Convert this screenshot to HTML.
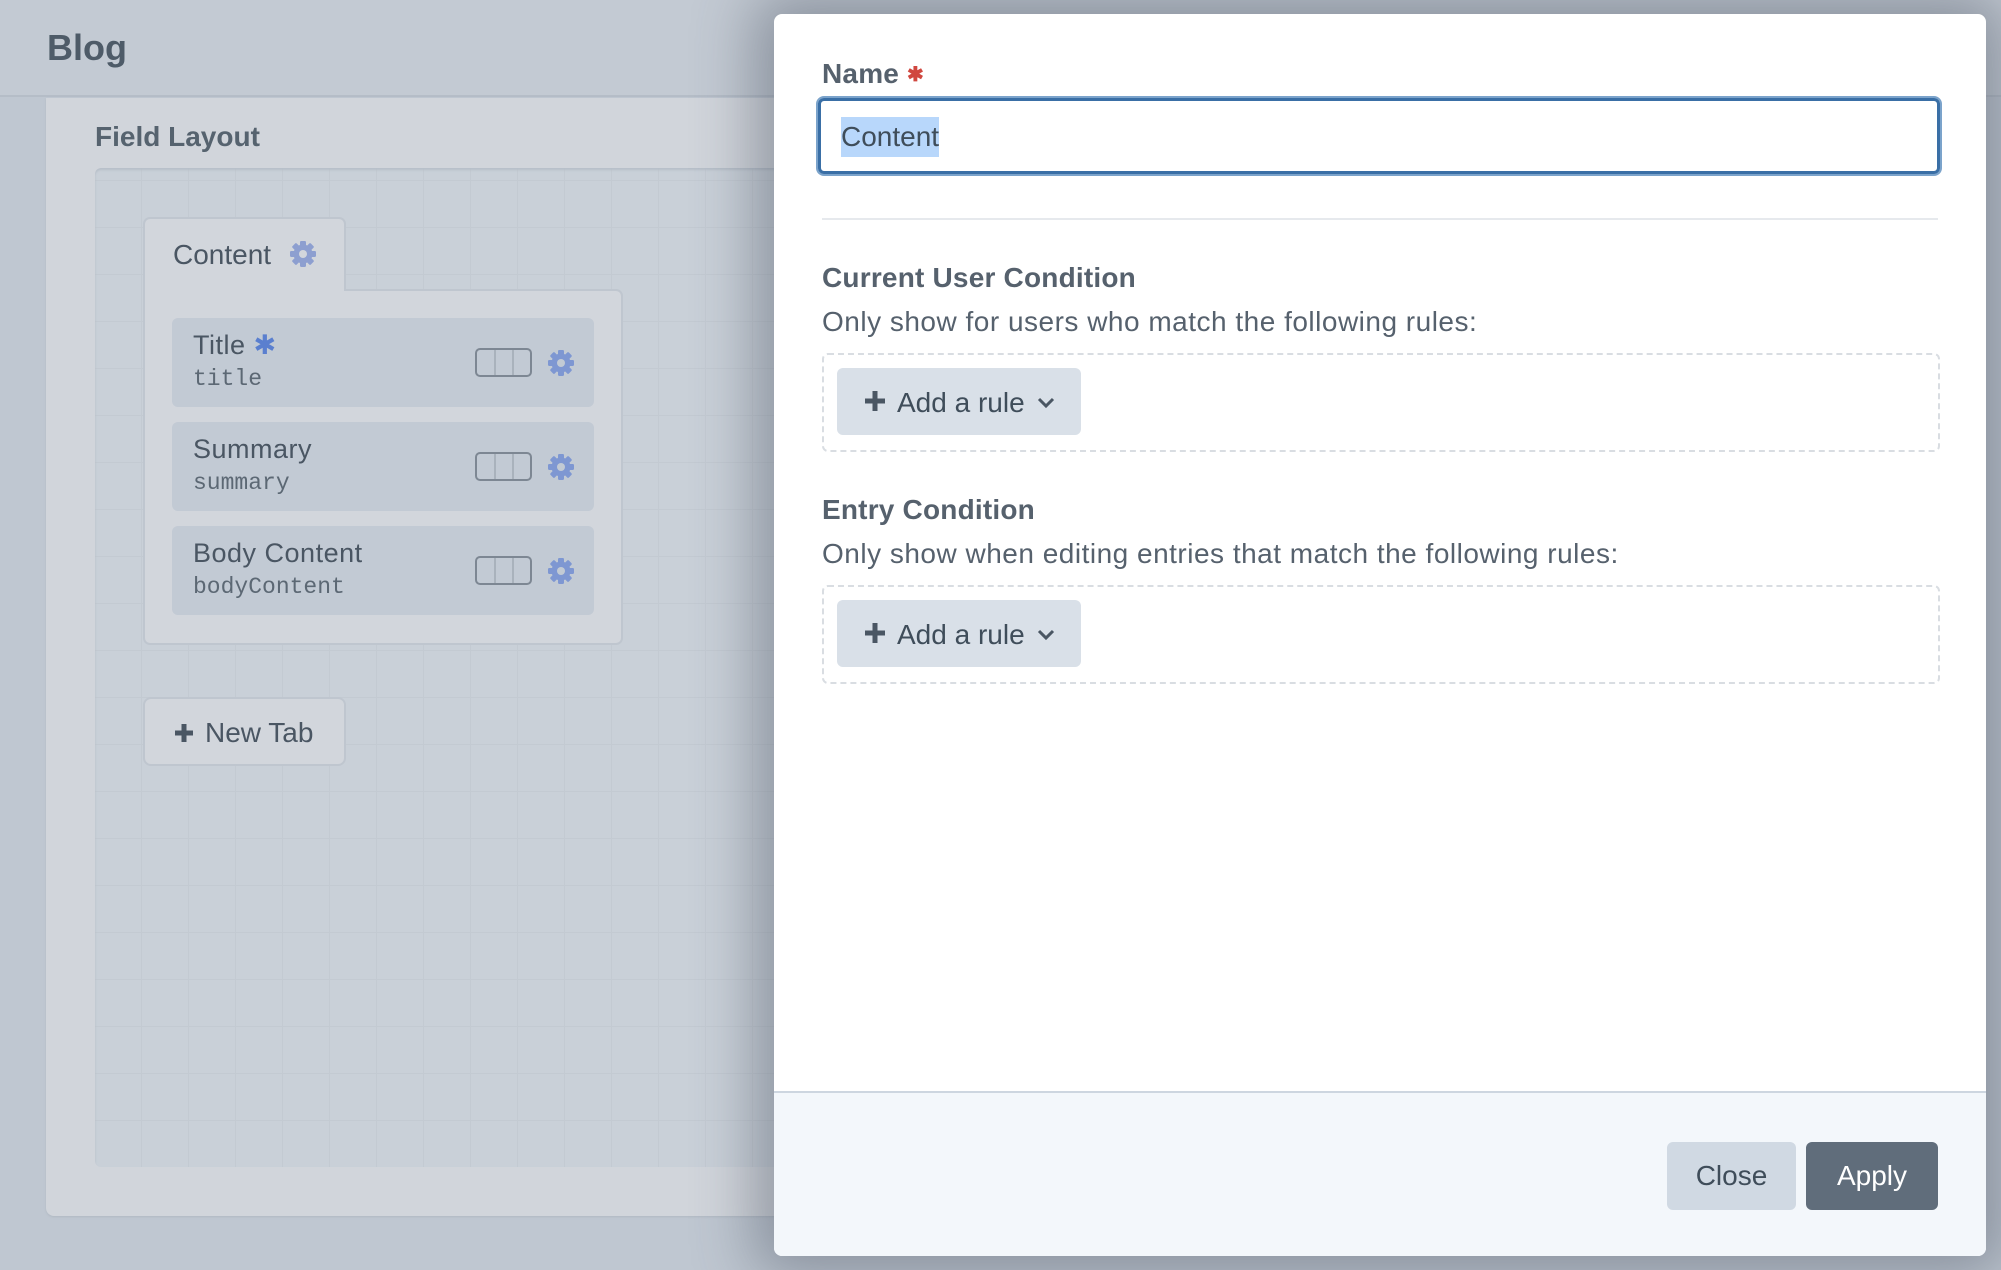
<!DOCTYPE html>
<html><head><meta charset="utf-8"><style>
*{box-sizing:border-box;margin:0;padding:0}
body{width:2001px;height:1270px;overflow:hidden;position:relative;background:#bfc7d1;font-family:"Liberation Sans",sans-serif;color:#3f4d5a}
.abs{position:absolute}
.hdr{left:0;top:0;width:2001px;height:97px;background:#c3cad3;border-bottom:2px solid #b5bdc7}
.blog{left:47px;top:27px;font-size:36px;font-weight:bold;color:#4e5b68}
.card{left:46px;top:98px;width:1100px;height:1118px;background:#d1d5db;border-radius:0 0 8px 8px;box-shadow:0 1px 2px #b0b8c2}
.fl{left:95px;top:121px;font-size:28px;font-weight:bold;color:#56636f}
.grid{left:95px;top:168px;width:1000px;height:999px;border-radius:6px;background-color:#c9d0d8;
background-image:repeating-linear-gradient(90deg,transparent 0 46px,#c3cad2 46px 47px),repeating-linear-gradient(0deg,transparent 0 46px,#c3cad2 46px 47px);box-shadow:inset 0 2px 2px #b6bec8}
.tab{left:143px;top:217px;width:203px;height:76px;background:#d2d6dc;border:2px solid #bfc6cf;border-bottom:none;border-radius:7px 7px 0 0}
.tabbody{left:143px;top:289px;width:480px;height:356px;background:#d2d6dc;border:2px solid #bfc6cf;border-radius:0 7px 7px 7px}
.tabfix{left:145px;top:287px;width:199px;height:6px;background:#d2d6dc}
.ct{left:173px;top:239px;font-size:28px;color:#4a5663}
.row{left:172px;width:422px;height:89px;background:#c2cad4;border-radius:6px}
.rt{position:absolute;left:21px;top:12px;font-size:27px;letter-spacing:.5px;color:#4a5663}
.rc{position:absolute;left:21px;top:48px;font-size:23px;font-family:"Liberation Mono",monospace;color:#5c6874}
.tog{position:absolute;left:303px;top:30px;width:57px;height:29px;border:2px solid #7d8793;border-radius:5px;
background:linear-gradient(90deg,transparent 17px,#a9b2bc 17px 19px,transparent 19px 35px,#a9b2bc 35px 37px,transparent 37px)}
.gear{position:absolute}
.nt{left:143px;top:697px;width:203px;height:69px;background:#d2d6dc;border:2px solid #bfc6cf;border-radius:8px;font-size:28px;color:#4a5663;padding:18px 0 0 28px}
.modal{left:774px;top:14px;width:1212px;height:1242px;background:#fff;border-radius:8px;box-shadow:0 0 60px 20px rgba(70,80,95,.45);overflow:hidden}
.lbl{font-size:28px;font-weight:bold;color:#56616d;letter-spacing:.2px}
.desc{font-size:28px;color:#56616d;letter-spacing:.5px}
.inp{left:44px;top:84px;width:1122px;height:76px;border:3px solid #3a6fa6;border-radius:6px;box-shadow:0 0 0 2px #7ba3cb}
.dash{left:48px;width:1118px;height:99px;border:2px dashed #d9dde2;border-radius:6px}
.btn{position:absolute;left:13px;top:13px;width:244px;height:67px;background:#d9e0e8;border-radius:6px;font-size:28px;color:#3f4d5a}
.foot{left:0;top:1077px;width:1212px;height:165px;background:#f3f7fb;border-top:2px solid #cdd6e0}
.b2{position:absolute;top:49px;height:68px;border-radius:6px;font-size:28px;text-align:center;line-height:68px}
</style></head><body>
<div class="abs hdr"></div>
<div class="abs blog">Blog</div>
<div class="abs card"></div>
<div class="abs fl">Field Layout</div>
<div class="abs grid"></div>
<div class="abs tab"></div>
<div class="abs tabbody"></div>
<div class="abs tabfix"></div>
<div class="abs ct">Content</div>
<svg class="abs" style="left:289px;top:240px" width="28" height="28" viewBox="0 0 28 28"><g fill="#8d9fd0"><circle cx="14" cy="14" r="9.5"/><rect x="11" y="1" width="6" height="26" rx="1.2"/><rect x="11" y="1" width="6" height="26" rx="1.2" transform="rotate(45 14 14)"/><rect x="11" y="1" width="6" height="26" rx="1.2" transform="rotate(90 14 14)"/><rect x="11" y="1" width="6" height="26" rx="1.2" transform="rotate(135 14 14)"/></g><circle cx="14" cy="14" r="4" fill="#d2d6dc"/></svg>

<div class="abs row" style="top:318px"><div class="rt">Title <span style="color:#5a7fcf">✱</span></div><div class="rc">title</div><div class="tog"></div>
<svg class="gear" style="left:375px;top:31px" width="28" height="28" viewBox="0 0 28 28"><g fill="#7e97d2"><circle cx="14" cy="14" r="9.5"/><rect x="11" y="1" width="6" height="26" rx="1.2"/><rect x="11" y="1" width="6" height="26" rx="1.2" transform="rotate(45 14 14)"/><rect x="11" y="1" width="6" height="26" rx="1.2" transform="rotate(90 14 14)"/><rect x="11" y="1" width="6" height="26" rx="1.2" transform="rotate(135 14 14)"/></g><circle cx="14" cy="14" r="4" fill="#c2cad4"/></svg></div>
<div class="abs row" style="top:422px"><div class="rt">Summary</div><div class="rc">summary</div><div class="tog"></div>
<svg class="gear" style="left:375px;top:31px" width="28" height="28" viewBox="0 0 28 28"><g fill="#7e97d2"><circle cx="14" cy="14" r="9.5"/><rect x="11" y="1" width="6" height="26" rx="1.2"/><rect x="11" y="1" width="6" height="26" rx="1.2" transform="rotate(45 14 14)"/><rect x="11" y="1" width="6" height="26" rx="1.2" transform="rotate(90 14 14)"/><rect x="11" y="1" width="6" height="26" rx="1.2" transform="rotate(135 14 14)"/></g><circle cx="14" cy="14" r="4" fill="#c2cad4"/></svg></div>
<div class="abs row" style="top:526px"><div class="rt">Body Content</div><div class="rc">bodyContent</div><div class="tog"></div>
<svg class="gear" style="left:375px;top:31px" width="28" height="28" viewBox="0 0 28 28"><g fill="#7e97d2"><circle cx="14" cy="14" r="9.5"/><rect x="11" y="1" width="6" height="26" rx="1.2"/><rect x="11" y="1" width="6" height="26" rx="1.2" transform="rotate(45 14 14)"/><rect x="11" y="1" width="6" height="26" rx="1.2" transform="rotate(90 14 14)"/><rect x="11" y="1" width="6" height="26" rx="1.2" transform="rotate(135 14 14)"/></g><circle cx="14" cy="14" r="4" fill="#c2cad4"/></svg></div>

<div class="abs nt"><svg width="22" height="22" viewBox="0 0 22 22" style="vertical-align:-2px;margin-right:10px"><path d="M11 2V20M2 11H20" stroke="#4a5663" stroke-width="5"/></svg>New Tab</div>

<div class="abs modal">
 <div class="abs lbl" style="left:48px;top:44px">Name <span style="color:#d0473f;font-size:20px;vertical-align:2px">✱</span></div>
 <div class="abs inp"><span style="position:absolute;left:20px;top:16px;font-size:28px;color:#3f4d5a;background:#b8d7fb;padding:4px 0">Content</span></div>
 <div class="abs" style="left:48px;top:204px;width:1116px;height:2px;background:#e6e9ed"></div>
 <div class="abs lbl" style="left:48px;top:248px">Current User Condition</div>
 <div class="abs desc" style="left:48px;top:292px">Only show for users who match the following rules:</div>
 <div class="abs dash" style="top:339px"><div class="btn"><svg width="22" height="22" viewBox="0 0 22 22" style="position:absolute;left:27px;top:22px"><path d="M11 1V21M1 11H21" stroke="#4a5663" stroke-width="5"/></svg><span style="position:absolute;left:60px;top:19px">Add a rule</span><svg width="18" height="12" viewBox="0 0 18 12" style="position:absolute;left:200px;top:29px"><path d="M2 2L9 9L16 2" fill="none" stroke="#4a5663" stroke-width="3"/></svg></div></div>
 <div class="abs lbl" style="left:48px;top:480px">Entry Condition</div>
 <div class="abs desc" style="left:48px;top:524px">Only show when editing entries that match the following rules:</div>
 <div class="abs dash" style="top:571px"><div class="btn"><svg width="22" height="22" viewBox="0 0 22 22" style="position:absolute;left:27px;top:22px"><path d="M11 1V21M1 11H21" stroke="#4a5663" stroke-width="5"/></svg><span style="position:absolute;left:60px;top:19px">Add a rule</span><svg width="18" height="12" viewBox="0 0 18 12" style="position:absolute;left:200px;top:29px"><path d="M2 2L9 9L16 2" fill="none" stroke="#4a5663" stroke-width="3"/></svg></div></div>
 <div class="abs foot">
  <div class="b2" style="left:893px;width:129px;background:#d0d9e3;color:#3f4d5a">Close</div>
  <div class="b2" style="left:1032px;width:132px;background:#606d7b;color:#fff">Apply</div>
 </div>
</div>
</body></html>
